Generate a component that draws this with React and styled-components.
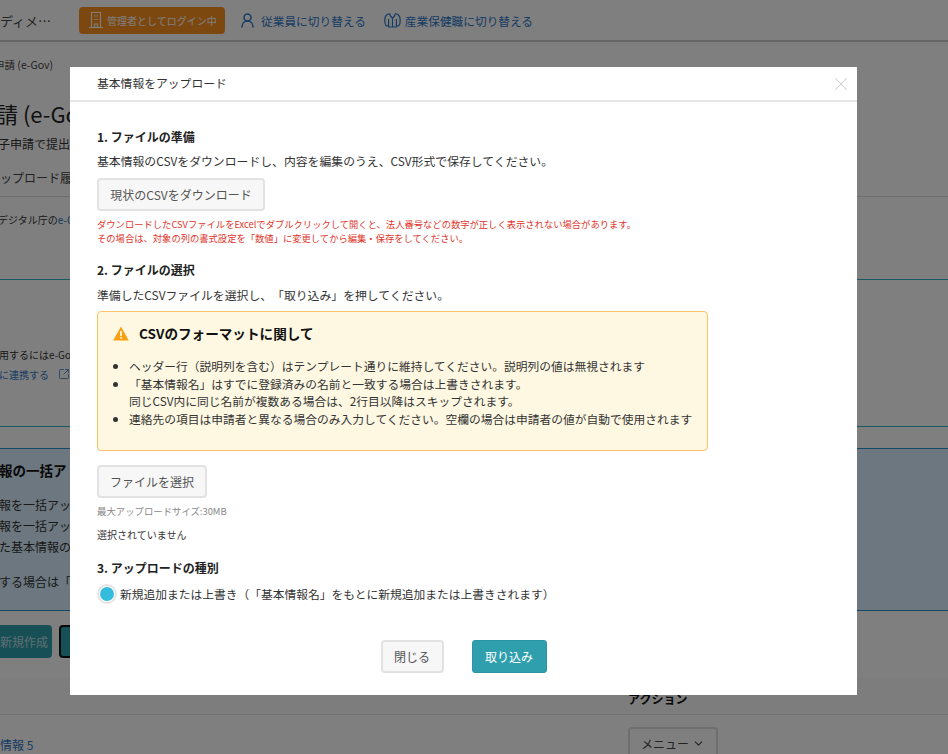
import React from "react";
import styled, { createGlobalStyle } from "styled-components";
import { ChevronDown, SquareArrowOutUpRight, X } from "lucide-react";

const Global = createGlobalStyle`
  html, body { margin: 0; padding: 0; background: #fff; }
  body {
    font-family: "Noto Sans CJK JP", "Noto Sans", sans-serif;
    color: #333;
    text-spacing-trim: space-all;
  }
  * { box-sizing: border-box; }
`;

const Page = styled.div`
  width: 948px;
  height: 754px;
  overflow: hidden;
  display: flex;
  flex-direction: column;
  background: #fff;
`;

const TopBar = styled.header`
  height: 42px;
  flex: none;
  display: flex;
  align-items: center;
  border-bottom: 2px solid #ccc;
  background: #fff;
  font-size: 13px;
`;
const Brand = styled.span`
  width: 79px;
  flex: none;
  font-size: 13px;
  white-space: nowrap;
  color: #444;
`;
const AdminBadge = styled.div`
  height: 27px;
  width: 146px;
  flex: none;
  border-radius: 4px;
  background: #f8901f;
  color: #fff;
  display: flex;
  align-items: center;
  gap: 3px;
  padding-left: 9px;
  font-size: 10px;
  white-space: nowrap;
`;
const SwitchLink = styled.a`
  display: flex;
  align-items: center;
  gap: ${(p) => p.$gap}px;
  margin-left: ${(p) => p.$ml}px;
  color: #2f78c8;
  font-size: 11.7px;
  white-space: nowrap;
`;

const TextRow = styled.div`
  flex: none;
  height: ${(p) => p.$h}px;
  display: flex;
  align-items: center;
  white-space: nowrap;
  font-size: ${(p) => p.$size || 12}px;
  font-weight: ${(p) => (p.$bold ? 700 : 400)};
  color: ${(p) => p.$color || "#333"};
  margin-left: ${(p) => p.$shift || 0}px;
  margin-top: ${(p) => p.$mt || 0}px;
`;
const TabLine = styled.div`
  flex: none;
  height: 1px;
  margin-top: 7px;
  background: #d8d8d8;
`;
const TealLine = styled.div`
  flex: none;
  height: 1px;
  margin-top: ${(p) => p.$mt}px;
  background: #2fb0c4;
`;
const DocLink = styled.span`
  color: #1a6fc0;
`;
const ConnectLink = styled.span`
  display: flex;
  align-items: center;
  gap: 9px;
  color: #2f78c8;
`;
const BulkPanel = styled.section`
  flex: none;
  height: 163px;
  margin-top: 21px;
  background: #d8effe;
  border-top: 1px solid #2a8fd0;
  border-bottom: 1px solid #2a8fd0;
  display: flex;
  flex-direction: column;
`;
const BulkActions = styled.div`
  flex: none;
  display: flex;
  gap: 7px;
  margin-top: 14px;
  height: 33px;
`;
const TealAction = styled.button`
  height: 33px;
  width: ${(p) => p.$w}px;
  margin-left: ${(p) => p.$shift || 0}px;
  padding: 0;
  border: ${(p) => (p.$outlined ? "2px solid #111" : "0")};
  border-radius: 4px;
  background: #2f9fae;
  color: #bfdde0;
  font: inherit;
  font-size: 12px;
`;
const TableHead = styled.div`
  flex: none;
  height: 57px;
  border-bottom: 1px solid #e6e6e6;
  padding-left: 628px;
  padding-top: 31px;
  font-size: 12px;
  font-weight: 700;
  line-height: 20px;
  color: #111;
  background: linear-gradient(#fff 0, #fff 20px, #fafafa 20px);
`;
const TableRow = styled.div`
  flex: none;
  display: flex;
  align-items: flex-start;
  justify-content: space-between;
  padding-top: 12px;
  padding-right: 230px;
`;
const RowLink = styled.a`
  color: #2f78c8;
  font-size: 12px;
  margin-top: 9px;
  white-space: nowrap;
`;
const MenuButton = styled.button`
  width: 90px;
  height: 33px;
  border: 2px solid #dcdcdc;
  border-radius: 4px;
  background: #fff;
  font: inherit;
  font-size: 12px;
  color: #444;
  display: flex;
  align-items: center;
  justify-content: center;
  gap: 3px;
`;

const Overlay = styled.div`
  position: fixed;
  inset: 0;
  background: rgba(0, 0, 0, 0.5);
`;
const Modal = styled.div`
  position: fixed;
  left: 70px;
  top: 67px;
  width: 787px;
  height: 628px;
  background: #fff;
  display: flex;
  flex-direction: column;
  color: #333;
`;
const ModalHeader = styled.div`
  height: 35px;
  flex: none;
  padding: 0 5px 3px 27px;
  display: flex;
  align-items: center;
  justify-content: space-between;
  border-bottom: 2px solid #e6e6e6;
  font-size: 11.8px;
`;
const CloseIcon = styled(X)`
  margin-top: 3px;
`;
const ModalBody = styled.div`
  flex: 1;
  padding: 0 27px;
  display: flex;
  flex-direction: column;
`;
const StepTitle = styled.h3`
  margin: ${(p) => p.$mt}px 0 0;
  font-size: 12px;
  line-height: 18px;
  font-weight: 700;
  color: #222;
`;
const Para = styled.p`
  margin: ${(p) => p.$mt}px 0 0;
  font-size: ${(p) => p.$size || 11.85}px;
  line-height: 18px;
`;
const GreyButton = styled.button`
  height: 33px;
  width: ${(p) => p.$w}px;
  flex: none;
  background: #f7f7f7;
  border: 2px solid #e2e2e2;
  border-radius: 4px;
  color: #555;
  font: inherit;
  font-size: 12px;
  padding: 0;
`;
const StepButton = styled(GreyButton)`
  margin-top: ${(p) => p.$mt}px;
`;
const RedNote = styled.p`
  margin: 6px 0 0;
  font-size: 9.3px;
  line-height: 14px;
  color: #e0352b;
`;
const Alert = styled.div`
  margin-top: 7px;
  width: 611px;
  height: 140px;
  flex: none;
  border: 1.5px solid #fcc368;
  border-radius: 4px;
  background: #fef8e2;
  padding: 11px 15px;
`;
const AlertTitle = styled.div`
  display: flex;
  align-items: center;
  gap: 10px;
  height: 20px;
  font-size: 13.6px;
  font-weight: 700;
  color: #111;
`;
const AlertList = styled.ul`
  margin: 14px 0 0;
  padding: 0 0 0 16px;
  font-size: 11.76px;
  line-height: 17.7px;
  color: #333;
  white-space: nowrap;
`;
const Hint = styled.p`
  margin: 6px 0 0;
  font-size: 9.4px;
  line-height: 14px;
  color: #888;
`;
const Radio = styled.label`
  display: flex;
  align-items: center;
  gap: 3px;
  margin-top: 7px;
  font-size: 11.76px;
  line-height: 20px;
`;
const RadioDot = styled.span`
  width: 20px;
  height: 20px;
  flex: none;
  border-radius: 50%;
  border: 2px solid #e4e4e4;
  background: #fff;
  display: flex;
  align-items: center;
  justify-content: center;
  &::after {
    content: "";
    width: 14px;
    height: 14px;
    border-radius: 50%;
    background: #35bcdc;
  }
`;
const Footer = styled.div`
  display: flex;
  justify-content: center;
  gap: 28px;
  margin-top: 36px;
`;
const PrimaryButton = styled.button`
  width: 75px;
  height: 33px;
  border: 1px solid #2b95a5;
  border-radius: 3px;
  background: #2f9fae;
  color: #fff;
  font: inherit;
  font-size: 12px;
  padding: 0;
`;

const BuildingIcon = () => (
  <svg width="16" height="18" viewBox="0 0 16 18" fill="none" stroke="#fff" strokeWidth="1.1">
    <path d="M3.500 16V1.500H12.500V16" />
    <path d="M1 16.500H15" />
    <path d="M6.500 16v-3h3v3" />
    <path d="M6 5h1.500M8.500 5H10M6 8.500h1.500M8.500 8.500H10" />
  </svg>
);
const PersonIcon = () => (
  <svg width="13" height="15" viewBox="0 0 13 15" fill="none" stroke="#2f78c8" strokeWidth="1.5" strokeLinecap="round">
    <circle cx="6.500" cy="4.500" r="3.500" />
    <path d="M1 14c0-3.500 2.300-6 5.500-6s5.500 2.500 5.500 6" />
  </svg>
);
const UniformIcon = () => (
  <svg width="17" height="16" viewBox="0 0 17 16" fill="none" stroke="#2f78c8" strokeWidth="1.200" strokeLinejoin="round">
    <path d="M5.500 1.500 2.800 2.800C1.500 3.700.8 5.500.8 8.500c0 2.500.5 4.500 1.500 5.500l2.300-.5V15h7.800v-1.500l2.300.5c1-1 1.500-3 1.500-5.500 0-3-.7-4.800-2-5.700L11.500 1.500" />
    <path d="M5.500 1.500c.5 2 1.500 3.500 3 4.500 1.500-1 2.500-2.500 3-4.500" />
    <path d="M8.500 6v9M4.600 7v6.500M12.400 7v6.500" />
  </svg>
);
const WarnIcon = () => (
  <svg width="16" height="15" viewBox="0 0 16 15">
    <path d="M8 .5 15.800 14.500H.2Z" fill="#f9a012" />
    <rect x="7.200" y="5" width="1.600" height="5" fill="#fff" />
    <rect x="7.200" y="11" width="1.600" height="1.700" fill="#fff" />
  </svg>
);

export default function App() {
  return (
    <>
      <Global />
      <Page>
        <TopBar>
          <Brand>ディメ…</Brand>
          <AdminBadge>
            <BuildingIcon />
            管理者としてログイン中
          </AdminBadge>
          <SwitchLink $gap={7} $ml={16}>
            <PersonIcon />
            従業員に切り替える
          </SwitchLink>
          <SwitchLink $gap={4} $ml={18}>
            <UniformIcon />
            産業保健職に切り替える
          </SwitchLink>
        </TopBar>
        <TextRow $h={24} $mt={10} $size={10.5} $shift={-6} $color="#444">申請 (e-Gov)</TextRow>
        <TextRow $h={42} $mt={16} $size={22} $shift={-4} $color="#222">請 (e-Gov)</TextRow>
        <TextRow $h={18} $size={12} $shift={-14}>電子申請で提出</TextRow>
        <TextRow $h={24} $mt={13} $size={12} $shift={-12} $color="#444">アップロード履歴</TextRow>
        <TabLine />
        <TextRow $h={24} $mt={10} $size={10} $shift={-2}>デジタル庁の<DocLink>e-Gov</DocLink></TextRow>
        <TealLine $mt={48} />
        <TextRow $h={20} $mt={64} $size={10} $shift={-1}>用するにはe-Gov</TextRow>
        <TextRow $h={20} $size={10} $shift={-1}>
          <ConnectLink>
            に連携する
            <SquareArrowOutUpRight size={12} strokeWidth={1.5} />
          </ConnectLink>
        </TextRow>
        <TealLine $mt={42} />
        <BulkPanel>
          <TextRow $h={20} $mt={11} $size={13.5} $bold $color="#111" $shift={-1}>報の一括ア</TextRow>
          <TextRow $h={20} $mt={14} $size={12} $shift={-1}>報を一括アップ</TextRow>
          <TextRow $h={20} $mt={1} $size={12} $shift={-1}>報を一括アップ</TextRow>
          <TextRow $h={20} $mt={1} $size={12} $shift={-1}>た基本情報の</TextRow>
          <TextRow $h={20} $mt={15} $size={12} $shift={-1}>する場合は「基本</TextRow>
        </BulkPanel>
        <BulkActions>
          <TealAction $w={56} $shift={-4}>新規作成</TealAction>
          <TealAction $w={40} $outlined />
        </BulkActions>
        <TableHead>アクション</TableHead>
        <TableRow>
          <RowLink>情報 5</RowLink>
          <MenuButton>
            メニュー
            <ChevronDown size={13} />
          </MenuButton>
        </TableRow>
      </Page>
      <Overlay />
      <Modal>
        <ModalHeader>
          基本情報をアップロード
          <CloseIcon size={22} strokeWidth={1.1} color="#cfcfcf" />
        </ModalHeader>
        <ModalBody>
          <StepTitle $mt={26}>1. ファイルの準備</StepTitle>
          <Para $mt={6}>基本情報のCSVをダウンロードし、内容を編集のうえ、CSV形式で保存してください。</Para>
          <StepButton $w={168} $mt={8}>現状のCSVをダウンロード</StepButton>
          <RedNote>
            ダウンロードしたCSVファイルをExcelでダブルクリックして開くと、法人番号などの数字が正しく表示されない場合があります。
            <br />
            その場合は、対象の列の書式設定を「数値」に変更してから編集・保存をしてください。
          </RedNote>
          <StepTitle $mt={16}>2. ファイルの選択</StepTitle>
          <Para $mt={7}>準備したCSVファイルを選択し、「取り込み」を押してください。</Para>
          <Alert>
            <AlertTitle>
              <WarnIcon />
              CSVのフォーマットに関して
            </AlertTitle>
            <AlertList>
              <li>ヘッダー行（説明列を含む）はテンプレート通りに維持してください。説明列の値は無視されます</li>
              <li>
                「基本情報名」はすでに登録済みの名前と一致する場合は上書きされます。
                <br />
                同じCSV内に同じ名前が複数ある場合は、2行目以降はスキップされます。
              </li>
              <li>連絡先の項目は申請者と異なる場合のみ入力してください。空欄の場合は申請者の値が自動で使用されます</li>
            </AlertList>
          </Alert>
          <StepButton $w={110} $mt={14}>ファイルを選択</StepButton>
          <Hint>最大アップロードサイズ:30MB</Hint>
          <Para $mt={8} $size={10}>選択されていません</Para>
          <StepTitle $mt={15}>3. アップロードの種別</StepTitle>
          <Radio>
            <RadioDot />
            新規追加または上書き（「基本情報名」をもとに新規追加または上書きされます）
          </Radio>
          <Footer>
            <GreyButton $w={63}>閉じる</GreyButton>
            <PrimaryButton>取り込み</PrimaryButton>
          </Footer>
        </ModalBody>
      </Modal>
    </>
  );
}
